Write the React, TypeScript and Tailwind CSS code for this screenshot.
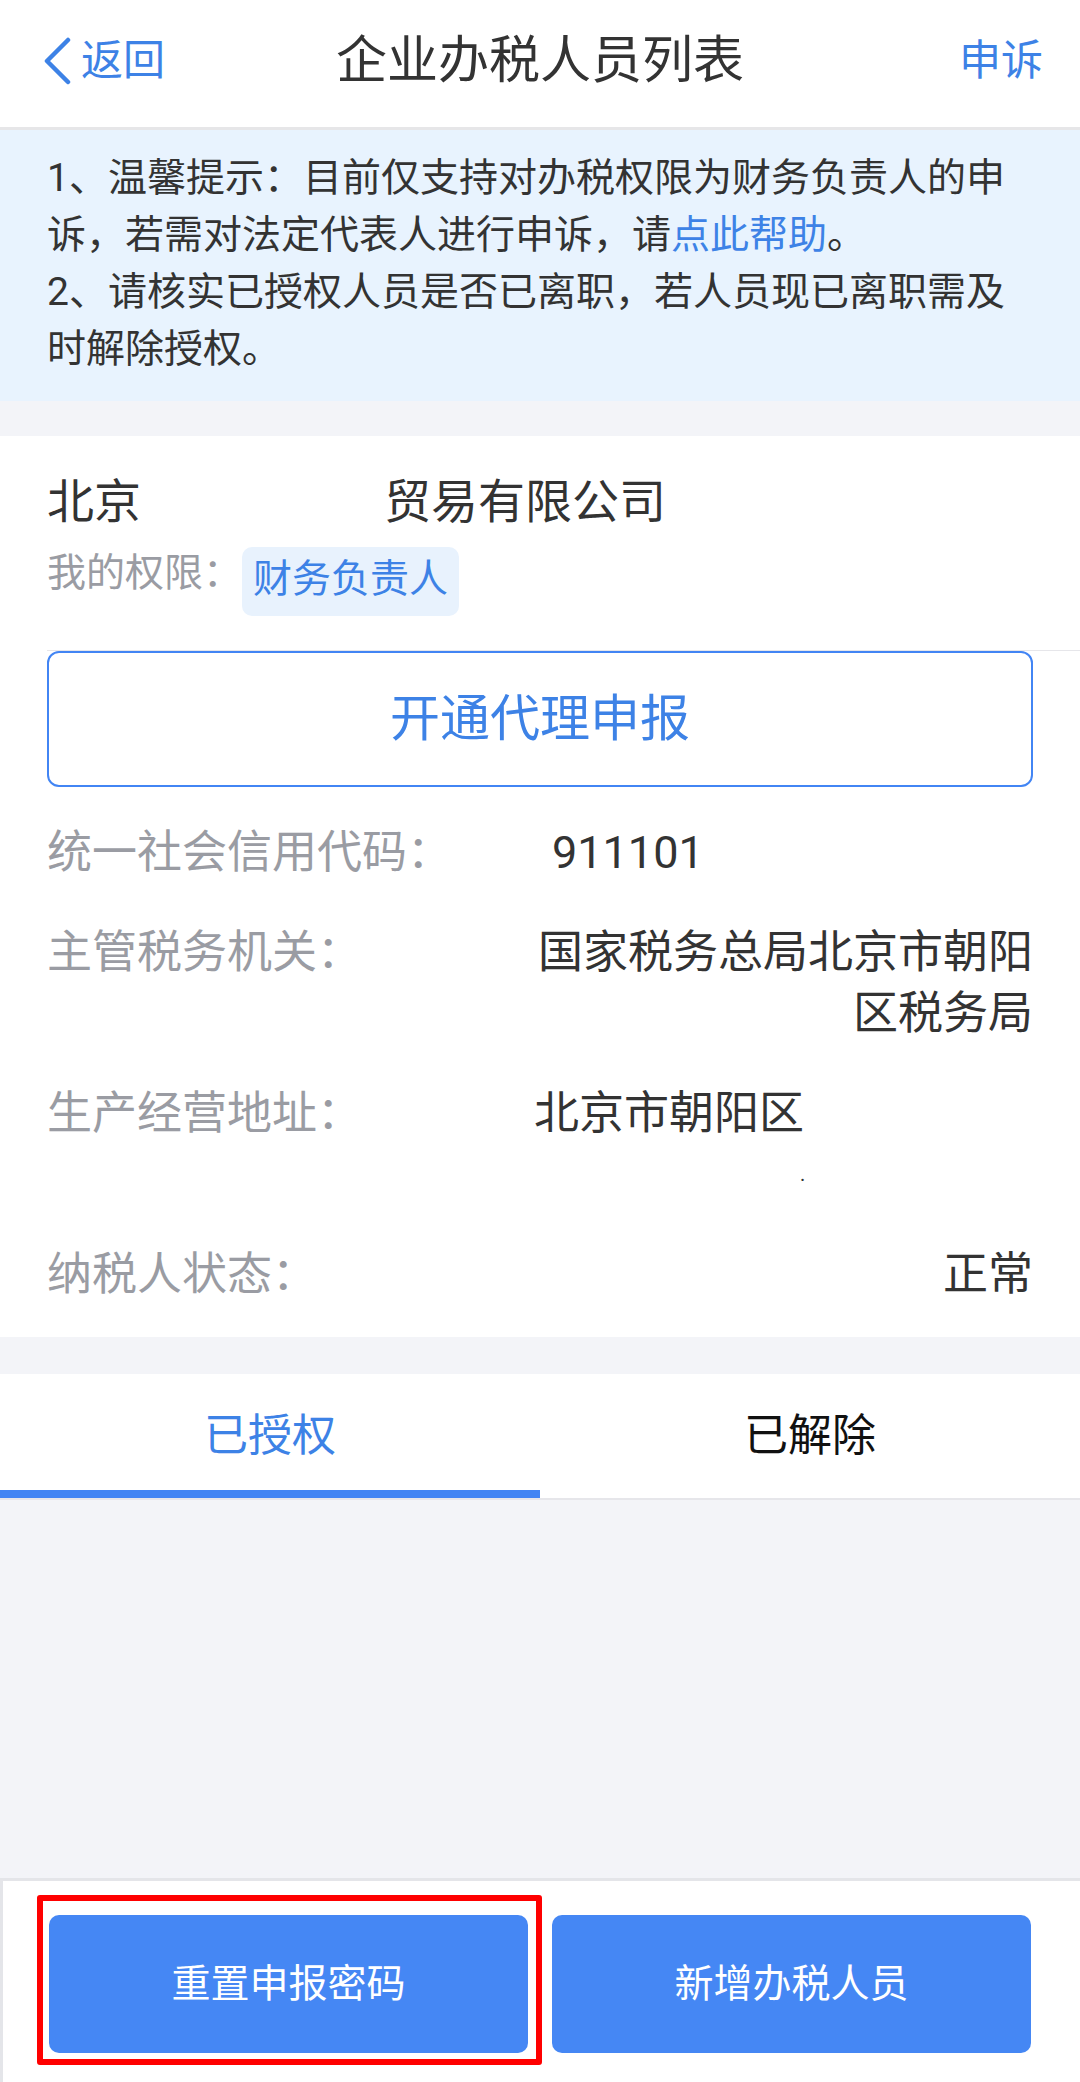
import React from 'react';

const rows = [
    { label: '统一社会信用代码：', kind: 'code' },
    { label: '主管税务机关：', kind: 'office' },
    { label: '生产经营地址：', kind: 'address' },
    { label: '纳税人状态：', kind: 'status' },
];

const InfoValue: React.FC<{ kind: string }> = ({ kind }) => {
    if (kind === 'code') {
        return <div className="pl-[18px] text-left">911101</div>;
    }
    if (kind === 'office') {
        return <div className="text-right">国家税务总局北京市朝阳区税务局</div>;
    }
    if (kind === 'address') {
        return (
            <div className="text-left">
                <div>北京市朝阳区</div>
                <div className="pl-[266px] text-[20px]">.</div>
            </div>
        );
    }
    return <div className="text-right">正常</div>;
};

const App: React.FC = () => {
    return (
        <div className="w-[1080px] h-[2082px] flex flex-col bg-[#f3f4f8] font-['Roboto','Noto_Sans_CJK_SC',sans-serif] text-[#333333]">
            {/* header */}
            <div className="h-[130px] shrink-0 bg-white border-b-[3px] border-[#e6e6e8] grid grid-cols-[1fr_auto_1fr] items-center pb-[6px]">
                <div className="flex items-center pl-[43px] text-[#3d82e6]">
                    <svg width="30" height="48" viewBox="0 0 30 48" fill="none">
                        <polyline points="25,3 4,24 25,45" stroke="#3d82e6" strokeWidth="4.5" strokeLinecap="round" strokeLinejoin="round" />
                    </svg>
                    <span className="ml-[8px] text-[42px] leading-none">返回</span>
                </div>
                <div className="text-[51px] leading-none text-[#333333]">企业办税人员列表</div>
                <div className="flex justify-end pr-[37px] text-[42px] leading-none text-[#3d82e6]">申诉</div>
            </div>

            {/* notice */}
            <div className="shrink-0 bg-[#e8f3fe] px-[47px] pt-[20px] pb-[23px] text-[39px] leading-[57px] text-[#333333]">
                <p>
                    1、温馨提示：目前仅支持对办税权限为财务负责人的申诉，若需对法定代表人进行申诉，请<span className="text-[#3d82e6]">点此帮助</span>。
                </p>
                <p>2、请核实已授权人员是否已离职，若人员现已离职需及时解除授权。</p>
            </div>

            {/* company card */}
            <div className="shrink-0 mt-[35px] bg-white pt-[36px] pb-[32px]">
                <div className="px-[47px] text-[47px] leading-[60px] text-[#333333]">
                    北京<span className="inline-block w-[243px]" />贸易有限公司
                </div>
                <div className="mt-[15px] px-[47px] flex items-start">
                    <span className="text-[39px] leading-[52px] text-[#9a9ca3]">我的权限：</span>
                    <span className="h-[69px] px-[11px] rounded-[10px] bg-[#e8f2fd] text-[39px] leading-[64px] text-[#3d82e6]">
                        财务负责人
                    </span>
                </div>
                <div className="mt-[34px] ml-[47px] h-px bg-[#e6e6ea]" />
                <div className="mx-[47px] h-[136px] rounded-[12px] border-2 border-[#4285f4] flex items-center justify-center text-[50px] text-[#3d82e6]">
                    开通代理申报
                </div>

                <div className="mt-[35px] px-[47px] flex flex-col gap-[39px] text-[45px] leading-[61px]">
                    {rows.map((row) => (
                        <div key={row.label} className="flex">
                            <div className="w-[487px] shrink-0 text-[#9a9ca3]">{row.label}</div>
                            <div className="flex-1 text-[#333333]">
                                <InfoValue kind={row.kind} />
                            </div>
                        </div>
                    ))}
                </div>
            </div>

            {/* tabs */}
            <div className="shrink-0 mt-[37px] bg-white h-[126px] flex border-b-2 border-[#e6e6ea]">
                <div className="relative flex-1 flex items-center justify-center text-[44px] text-[#3d82e6]">
                    已授权
                    <div className="absolute left-0 right-0 bottom-0 h-[8px] bg-[#4285f4]" />
                </div>
                <div className="flex-1 flex items-center justify-center text-[44px] text-[#111111]">已解除</div>
            </div>

            <div className="flex-1" />

            {/* bottom actions */}
            <div className="shrink-0 h-[204px] bg-white border-t-[3px] border-l-[3px] border-[#e4e5e9] pt-[34px] pl-[46px] pr-[49px] flex gap-[24px] items-start">
                <div className="relative flex-1">
                    <button className="w-full h-[138px] rounded-[10px] bg-[#4587f4] text-white text-[39px]">重置申报密码</button>
                    <div className="absolute -left-[12px] -right-[14px] -top-[20px] -bottom-[12px] border-[6px] border-[#ff0000] rounded-[3px]" />
                </div>
                <button className="flex-1 h-[138px] rounded-[10px] bg-[#4587f4] text-white text-[39px]">新增办税人员</button>
            </div>
        </div>
    );
};

export default App;
